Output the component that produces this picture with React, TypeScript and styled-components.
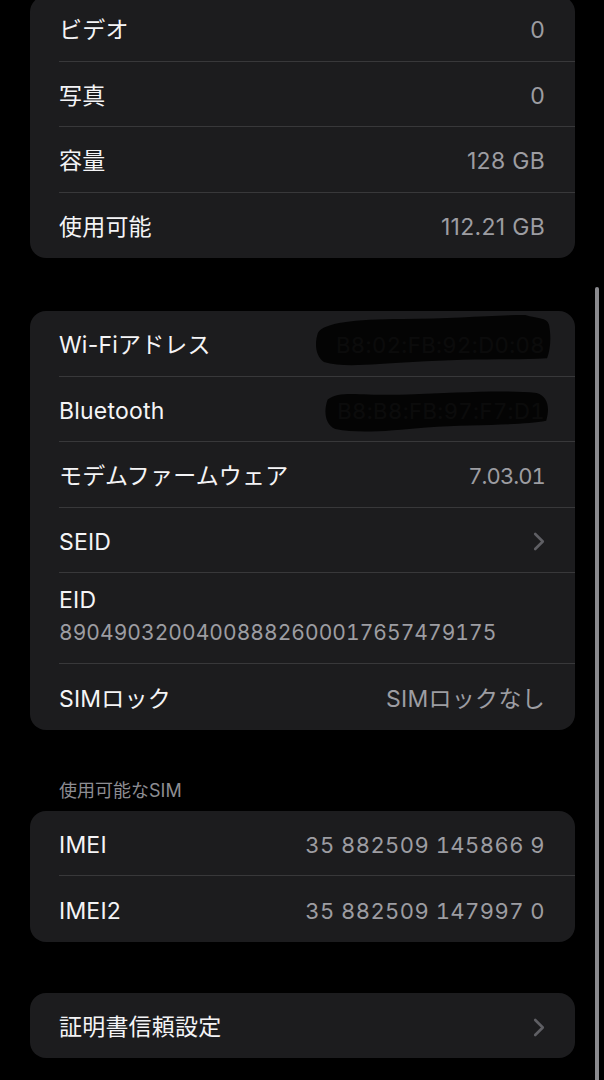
import React from "react";
import styled, { createGlobalStyle } from "styled-components";

const Global = createGlobalStyle`
  html, body { margin: 0; padding: 0; background: #000; }
  body {
    font-family: Inter, "Noto Sans CJK JP", sans-serif;
    -webkit-font-smoothing: antialiased;
  }
`;

const Page = styled.div`
  position: relative;
  width: 604px;
  height: 1080px;
  overflow: hidden;
  background: #000;
  box-sizing: border-box;
  padding: 0 29px 0 30px;
  display: flex;
  flex-direction: column;
`;

const Card = styled.div<{ $gap: number }>`
  background: #1c1c1e;
  border-radius: 16px;
  margin-top: ${(p) => p.$gap}px;
  display: flex;
  flex-direction: column;
  flex-shrink: 0;
`;

const Row = styled.div<{ $h?: number }>`
  position: relative;
  margin-left: 29px;
  padding-right: 30px;
  padding-top: 4px;
  height: ${(p) => p.$h ?? 65.5}px;
  box-sizing: border-box;
  display: flex;
  align-items: center;
  justify-content: space-between;
  border-bottom: 1px solid #38383a;
  &:last-child { border-bottom: none; }
`;

const StackRow = styled(Row)`
  flex-direction: column;
  align-items: flex-start;
  justify-content: flex-start;
  padding-top: 13px;
`;

const Label = styled.span`
  color: #f4f4f6;
  font-size: 23px;
  line-height: 28px;
  letter-spacing: 0.2px;
  white-space: nowrap;
`;

const Value = styled.span<{ $mono?: boolean; $tight?: boolean }>`
  color: #9d9da2;
  font-size: ${(p) => (p.$mono ? 22 : 23)}px;
  line-height: 28px;
  white-space: nowrap;
  letter-spacing: ${(p) => (p.$tight ? -0.9 : p.$mono ? 0.45 : 0.3)}px;
  font-variant-numeric: ${(p) => (p.$mono ? "tabular-nums" : "normal")};
`;

const EidNumber = styled.span`
  color: #9d9da2;
  font-size: 21px;
  line-height: 24px;
  margin-top: 7px;
  font-variant-numeric: tabular-nums;
  letter-spacing: 0.05px;
`;

const SectionHeader = styled.div`
  color: #8d8d92;
  font-size: 18px;
  line-height: 22px;
  padding-left: 29px;
  margin-top: 50px;
  margin-bottom: 9px;
  flex-shrink: 0;
`;

const Scribble = styled.svg<{ $top: number; $right: number }>`
  position: absolute;
  top: ${(p) => p.$top}px;
  right: ${(p) => p.$right}px;
  pointer-events: none;
`;

const Scrollbar = styled.div`
  position: absolute;
  right: 5px;
  top: 287px;
  bottom: -10px;
  width: 4px;
  border-radius: 2px;
  background: #8a8a8e;
`;

const Chevron = () => (
  <svg width="12" height="19" viewBox="0 0 12 19">
    <polyline
      points="2.2,2 9.8,9.5 2.2,17"
      fill="none"
      stroke="#5f5f64"
      strokeWidth="2.6"
      strokeLinecap="round"
      strokeLinejoin="round"
    />
  </svg>
);

const Blot = ({ w, h, top, right, variant }: { w: number; h: number; top: number; right: number; variant: number }) => (
  <Scribble $top={top} $right={right} width={w} height={h} viewBox="0 0 240 56" preserveAspectRatio="none">
    {variant === 0 ? (
      <path
        d="M4 20 C 10 10, 40 6, 90 6 C 140 6, 180 2, 214 2 C 226 6, 236 4, 238 12 C 240 22, 240 36, 236 46 C 200 48, 150 46, 100 50 C 60 52, 30 56, 10 50 C 2 44, 0 32, 4 20 Z"
        fill="rgba(3,3,3,0.95)"
      />
    ) : (
      <path
        d="M6 14 C 20 2, 40 10, 90 8 C 140 6, 190 2, 226 6 C 238 10, 240 24, 236 40 C 210 46, 160 44, 110 48 C 70 52, 40 56, 14 50 C 2 44, 2 26, 6 14 Z"
        fill="rgba(3,3,3,0.95)"
      />
    )}
  </Scribble>
);

type Item = { label: string; value?: string; mono?: boolean; tight?: boolean; chevron?: boolean };

const storage: Item[] = [
  { label: "ビデオ", value: "0" },
  { label: "写真", value: "0" },
  { label: "容量", value: "128 GB" },
  { label: "使用可能", value: "112.21 GB" },
];

const sims: Item[] = [
  { label: "IMEI", value: "35 882509 145866 9", mono: true },
  { label: "IMEI2", value: "35 882509 147997 0", mono: true },
];

const SimpleRow = ({ item }: { item: Item }) => (
  <Row>
    <Label>{item.label}</Label>
    {item.chevron ? <Chevron /> : <Value $mono={item.mono} $tight={item.tight}>{item.value}</Value>}
  </Row>
);

export default function App() {
  return (
    <>
      <Global />
      <Page>
        <Card $gap={-4}>
          {storage.map((it) => (
            <SimpleRow key={it.label} item={it} />
          ))}
        </Card>

        <Card $gap={53}>
          <Row>
            <Label>Wi-Fiアドレス</Label>
            <Value $mono>B8:02:FB:92:D0:08</Value>
            <Blot w={237} h={55} top={2} right={24} variant={0} />
          </Row>
          <Row>
            <Label>Bluetooth</Label>
            <Value $mono>B8:B8:FB:97:F7:D1</Value>
            <Blot w={228} h={46} top={11} right={25} variant={1} />
          </Row>
          <SimpleRow item={{ label: "モデムファームウェア", value: "7.03.01", mono: true, tight: true }} />
          <SimpleRow item={{ label: "SEID", chevron: true }} />
          <StackRow $h={91}>
            <Label>EID</Label>
            <EidNumber>89049032004008882600017657479175</EidNumber>
          </StackRow>
          <SimpleRow item={{ label: "SIMロック", value: "SIMロックなし" }} />
        </Card>

        <SectionHeader>使用可能なSIM</SectionHeader>
        <Card $gap={0}>
          {sims.map((it) => (
            <SimpleRow key={it.label} item={it} />
          ))}
        </Card>

        <Card $gap={51}>
          <SimpleRow item={{ label: "証明書信頼設定", chevron: true }} />
        </Card>

        <Scrollbar />
      </Page>
    </>
  );
}
